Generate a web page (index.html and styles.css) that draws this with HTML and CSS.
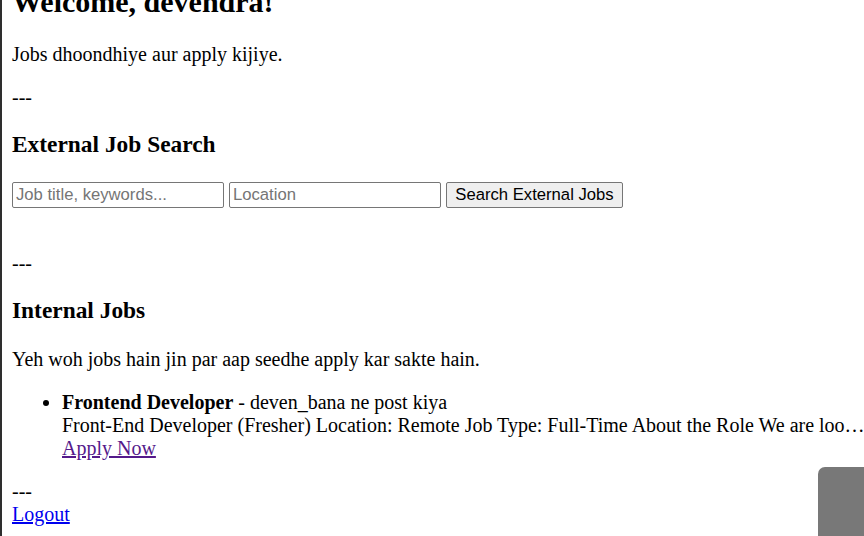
FILE: index.html
```html
<!DOCTYPE html>
<html lang="en">
<head>
<meta charset="utf-8">
<title>Dashboard</title>
<link rel="stylesheet" href="styles.css">
</head>
<body>
<div class="frame">
  <main class="page">
    <h2 class="welcome">Welcome, devendra!</h2>
    <p class="text">Jobs dhoondhiye aur apply kijiye.</p>
    <p class="text">---</p>
    <h3 class="section-title">External Job Search</h3>
    <form class="search">
      <input class="field" type="text" placeholder="Job title, keywords..."> <input class="field" type="text" placeholder="Location"> <button class="btn" type="button">Search External Jobs</button>
    </form>
    <p class="text">---</p>
    <h3 class="section-title">Internal Jobs</h3>
    <p class="text">Yeh woh jobs hain jin par aap seedhe apply kar sakte hain.</p>
    <ul class="jobs">
      <li class="job"><strong class="job-title">Frontend Developer</strong> - deven_bana ne post kiya<br><span class="desc">Front-End Developer (Fresher) Location: Remote Job Type: Full-Time About the Role We are loo…</span><br><a class="apply" href="#">Apply Now</a></li>
    </ul>
    <div class="footer">---<br><a class="logout" href="#">Logout</a></div>
  </main>
</div>
<div class="widget"></div>
</body>
</html>
```
FILE: styles.css
```css
html, body {
  margin: 0;
  height: 100%;
}
body {
  font-family: "Liberation Serif", "Times New Roman", serif;
  font-size: 20px;
  color: #000;
  background: #fff;
  overflow: hidden;
}
.frame {
  height: 100vh;
  box-sizing: border-box;
  border-left: 2px solid #2e2e2e;
  display: flex;
  flex-direction: column;
  justify-content: flex-end;
  overflow: hidden;
}
.page {
  padding: 0 10px 10px;
  flex-shrink: 0;
}
.welcome {
  font-size: 30px;
  font-weight: bold;
  margin: 24.9px 0;
}
.text {
  margin: 20px 0;
}
.section-title {
  font-size: 23.4px;
  font-weight: bold;
  margin: 21.4px 0 24.4px;
}
.search {
  margin: 0 0 44px;
}
.field {
  width: 212px;
  height: 26px;
  box-sizing: border-box;
  border: 1px solid #767676;
  border-radius: 2px;
  padding: 1px 3px;
  font-family: "Liberation Sans", Arial, sans-serif;
  font-size: 16.67px;
  color: #000;
  background: #fff;
  vertical-align: baseline;
}
.field::placeholder {
  color: #757575;
}
.btn {
  width: 177px;
  height: 26px;
  box-sizing: border-box;
  border: 1px solid #767676;
  border-radius: 2px;
  background: #efefef;
  padding: 0 6px;
  font-family: "Liberation Sans", Arial, sans-serif;
  font-size: 16.67px;
  color: #000;
  vertical-align: baseline;
}
.jobs {
  margin: 20px 0;
  padding-left: 50px;
}
.job-title {
  font-weight: bold;
}
.desc {
  white-space: nowrap;
}
.apply {
  color: #551a8b;
}
.logout {
  color: #0000ee;
}
.widget {
  position: fixed;
  right: 0;
  bottom: 0;
  width: 46px;
  height: 69px;
  background: #787878;
  border-top-left-radius: 7px;
}
```
